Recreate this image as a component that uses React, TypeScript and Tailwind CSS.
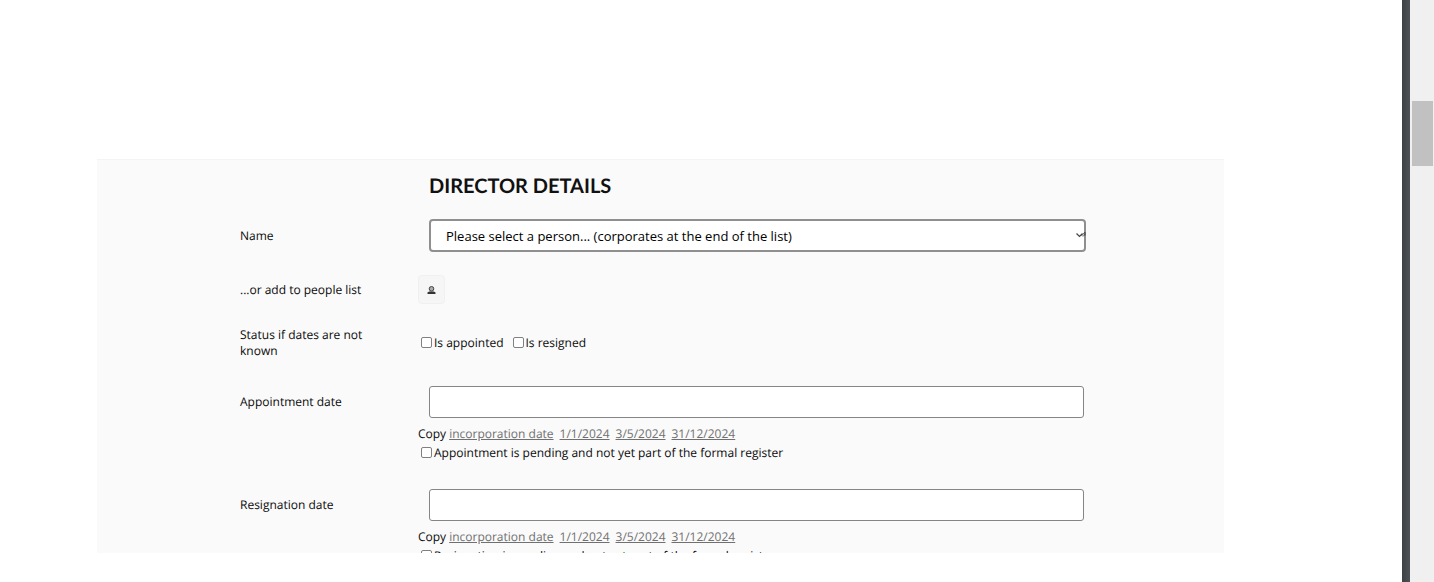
import { ReactNode } from "react";

const COPY_DATES = ["incorporation date", "1/1/2024", "3/5/2024", "31/12/2024"];

function Check({ label }: { label: string }) {
  return (
    <label className="flex items-center whitespace-nowrap">
      <input
        type="checkbox"
        className="mb-0.5 ml-[3px] mr-0.5 size-[11px] appearance-none rounded-[2px] border border-[#808080] bg-white checked:bg-[#555]"
      />
      {label}
    </label>
  );
}

function Row({ children }: { children: ReactNode }) {
  return <div className="grid grid-cols-[178px_1fr]">{children}</div>;
}

function DateRow({ id, label, pending }: { id: string; label: string; pending: string }) {
  return (
    <div className="pt-1">
      <Row>
        <label htmlFor={id} className="flex h-8 items-center">
          {label}
        </label>
        <div>
          <div className="pl-[11px] pr-0.5">
            <input
              id={id}
              type="text"
              className="block h-8 w-full rounded-[3px] border border-[#858585] bg-white px-4 text-[13px] outline-none"
            />
          </div>
          <div className="mt-1.5 flex h-5 items-center whitespace-nowrap">
            <span className="mr-[3px]">Copy</span>
            <div className="flex gap-1.5">
              {COPY_DATES.map((date) => (
                <a key={date} href="#" className="text-[#707070] underline">
                  {date}
                </a>
              ))}
            </div>
          </div>
          <div className="flex h-[18px] items-center">
            <Check label={pending} />
          </div>
        </div>
      </Row>
    </div>
  );
}

function DirectorForm() {
  return (
    <form className="flex flex-col gap-[23px] pl-[143px] pr-[138px] pt-3">
      <h2 className="-mb-1 pl-[189px] font-['Lato'] text-[20px] font-bold leading-7 text-[#111]">
        DIRECTOR DETAILS
      </h2>

      <Row>
        <label htmlFor="person" className="flex items-center">
          Name
        </label>
        <div className="relative ml-[11px]">
          <select
            id="person"
            className="block h-[33px] w-full appearance-none rounded-[4px] border-2 border-[#8f8f8f] bg-white px-[15px] text-[13px] text-black outline-none"
          >
            <option>Please select a person... (corporates at the end of the list)</option>
          </select>
          <svg
            viewBox="0 0 10 8"
            className="pointer-events-none absolute right-0 top-3 h-2 w-2.5"
            fill="none"
            stroke="#444"
            strokeWidth="1.2"
          >
            <path d="M0.5 2.5 L3.5 5.5 L6.5 2.5" />
            <path d="M5.5 5 L9 1 M7 5.5 L9.5 2.8 M9 1 V4.5" strokeWidth="0.9" />
          </svg>
        </div>
      </Row>

      <Row>
        <span className="flex items-center">...or add to people list</span>
        <button
          type="button"
          aria-label="Add person"
          className="flex h-[29px] w-[27px] items-center justify-center rounded-[4px] border border-[#f0f0f0] bg-[#f6f6f6]"
        >
          <svg viewBox="0 0 9 8" className="h-2 w-[9px]">
            <circle cx="4.5" cy="2.8" r="2.3" fill="#aaa" stroke="#444" strokeWidth="1" />
            <path d="M0.5 8 V6.6 Q0.8 5.6 2.3 5.4 H6.7 Q8.2 5.6 8.5 6.6 V8 Z" fill="#333" />
          </svg>
        </button>
      </Row>

      <Row>
        <span className="w-[130px]">Status if dates are not known</span>
        <div className="flex items-center gap-1.5">
          <Check label="Is appointed" />
          <Check label="Is resigned" />
        </div>
      </Row>

      <DateRow
        id="appointment"
        label="Appointment date"
        pending="Appointment is pending and not yet part of the formal register"
      />
      <DateRow
        id="resignation"
        label="Resignation date"
        pending="Resignation is pending and not yet part of the formal register"
      />
    </form>
  );
}

export default function App() {
  return (
    <div className="flex h-screen overflow-hidden bg-white font-['Open_Sans','Noto_Sans',sans-serif] text-[12px] leading-4 text-[#0a0a0a] [text-rendering:geometricPrecision]">
      <main className="flex min-w-0 flex-1 flex-col pb-[29px] pl-[97px] pr-[178px] pt-[159px]">
        <section className="min-h-0 flex-1 overflow-hidden border-t border-[#f4f4f4] bg-[#fafafa]">
          <DirectorForm />
        </section>
      </main>
      <div className="w-2 bg-linear-to-r from-[#3d4144] to-[#4d5256]" />
      <div className="w-6 bg-[#f0f0f0] pl-0.5 pr-px pt-[101px]">
        <div className="h-[65px] bg-[#c1c1c1]" />
      </div>
    </div>
  );
}
